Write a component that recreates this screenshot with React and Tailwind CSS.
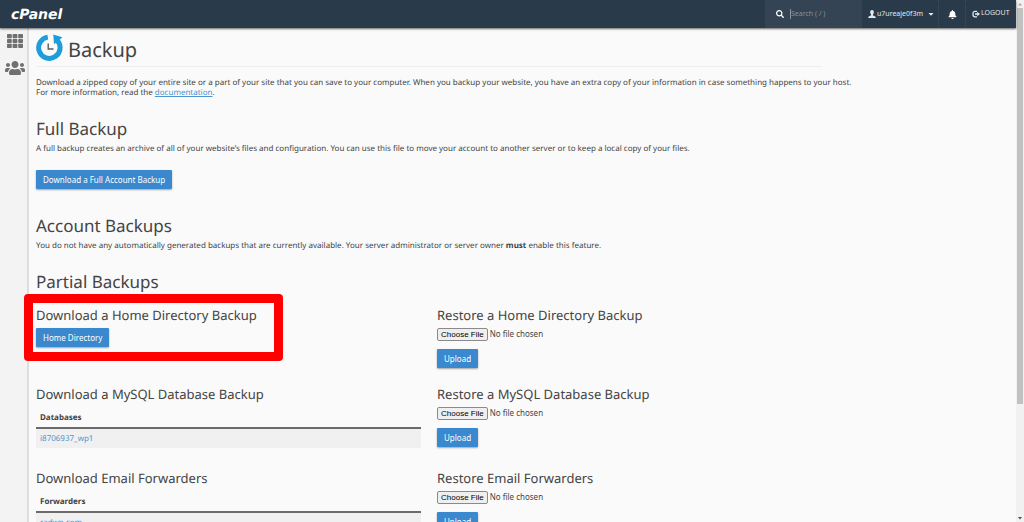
import { FaSearch, FaBell, FaCaretDown, FaUsers } from 'react-icons/fa';

const partials = [
  {
    id: 'home',
    download: 'Download a Home Directory Backup',
    restore: 'Restore a Home Directory Backup',
    action: 'Home Directory',
    highlighted: true,
  },
  {
    id: 'mysql',
    download: 'Download a MySQL Database Backup',
    restore: 'Restore a MySQL Database Backup',
    column: 'Databases',
    rows: ['i8706937_wp1'],
  },
  {
    id: 'forwarders',
    download: 'Download Email Forwarders',
    restore: 'Restore Email Forwarders',
    column: 'Forwarders',
    rows: ['radwp.com'],
  },
];

function Button({ children }) {
  return (
    <button
      type="button"
      className="block h-[19px] rounded-[1px] bg-[#3a88cd] px-[7px] text-[8px] text-white shadow-[0_1px_2px_rgba(0,0,0,0.35)]"
    >
      {children}
    </button>
  );
}

function UserIcon() {
  return (
    <svg viewBox="0 0 16 16" className="h-[8px] w-[8px] fill-current" aria-hidden="true">
      <path d="M8 0C5.6 0 4.3 1.8 4.3 4.3c0 1.9.8 3.6 1.9 4.6v1.5C5 11.4.5 12.5.5 14.6V16h15v-1.4c0-2.1-4.5-3.2-5.7-4.2V8.9c1.1-1 1.9-2.7 1.9-4.6C11.7 1.8 10.4 0 8 0z" />
    </svg>
  );
}

function LogoutIcon() {
  return (
    <svg viewBox="0 0 16 16" className="h-[8px] w-[8px]" aria-hidden="true">
      <path d="M10 2.5H6A4 4 0 0 0 2 6.5v3a4 4 0 0 0 4 4h4" fill="none" stroke="currentColor" strokeWidth="2.5" />
      <path d="M10.5 3.5L16 8l-5.5 4.5v-3H6v-3h4.5z" fill="currentColor" />
    </svg>
  );
}

function GridIcon() {
  const columns = [0, 5.6, 11.2];
  const rows = [0, 4.9, 9.8];
  return (
    <svg viewBox="0 0 16 14" className="h-[14px] w-[16px] fill-[#707070]" aria-hidden="true">
      {columns.map((x) => rows.map((y) => (
        <rect key={`${x}-${y}`} x={x} y={y} width="4.8" height="4.2" rx="0.8" />
      )))}
    </svg>
  );
}

function BackupIcon() {
  return (
    <svg viewBox="0 0 27 27" className="h-[27px] w-[27px]" aria-hidden="true">
      <path d="M11.8 3.1A10.7 10.7 0 1 0 21 6.2" fill="none" stroke="#1f9ddb" strokeWidth="5" />
      <path d="M17.3 0.5L26.3 3.3L23.5 6L18 10.2z" fill="#1f9ddb" />
      <path d="M12.2 9.5v5.5h5.3" fill="none" stroke="#5a5a5a" strokeWidth="1.4" />
    </svg>
  );
}

function Header() {
  return (
    <header className="relative z-10 flex h-[28px] shrink-0 items-stretch bg-[#293a4a] text-[7px] text-white shadow-[0_1px_2px_rgba(0,0,0,0.6)]">
      <a href="#home" className="flex items-center pt-[1px] pl-[11px] font-['DejaVu_Sans',sans-serif] text-[14px] leading-none font-bold italic">
        cPanel
      </a>
      <div className="ml-auto flex">
        <label className="flex w-[97px] items-center gap-[6px] bg-[#354454] pl-[11px]">
          <FaSearch className="size-[8px]" />
          <input
            type="text"
            aria-label="Search"
            placeholder="Search ( / )"
            className="h-[10px] w-[60px] border-l border-[#8b95a0] outline-none placeholder:text-[#84909b]"
          />
        </label>
        <button type="button" className="flex w-[76px] items-center gap-[1px] pl-[6px] text-[#e4e7ea]">
          <UserIcon />
          <span>u7ureaje0f3m</span>
          <FaCaretDown className="ml-[3px] size-[8px]" />
        </button>
        <button type="button" aria-label="Notifications" className="flex w-[28px] items-center justify-center border-x border-dotted border-[#3d4d5c]">
          <FaBell className="size-[9px]" />
        </button>
        <a href="#logout" className="flex w-[50px] items-center gap-[1px] pl-[6px] text-[#e4e7ea]">
          <LogoutIcon />
          LOGOUT
        </a>
      </div>
    </header>
  );
}

function Sidebar() {
  return (
    <nav className="flex w-[29px] shrink-0 flex-col items-center gap-[10px] border-r-2 border-[#dedede] bg-[#f3f3f3] pt-[6px] pl-[2px]">
      <a href="#tools" aria-label="Tools"><GridIcon /></a>
      <a href="#users" aria-label="User Manager"><FaUsers className="size-[20px] text-[#707070]" /></a>
    </nav>
  );
}

function DownloadTable({ column, rows }) {
  return (
    <table className="mt-[4px] mb-[4px] w-full text-left text-[8px]">
      <thead>
        <tr className="h-[21px] border-b-2 border-[#6b6b6b]">
          <th className="px-[4px] pt-[2px] font-bold">{column}</th>
        </tr>
      </thead>
      <tbody>
        {rows.map((row) => (
          <tr key={row} className="h-[20px] bg-[#f0f0f0]">
            <td className="px-[4px]"><a href={`#${row}`} className="text-[#4a94d0]">{row}</a></td>
          </tr>
        ))}
      </tbody>
    </table>
  );
}

function PartialBackup({ item }) {
  return (
    <div className="grid grid-cols-2 gap-x-[16px] pb-[18px]">
      <section className="relative">
        {item.highlighted && (
          <div className="pointer-events-none absolute -top-[13px] -left-[12px] h-[67px] w-[259px] rounded-[4px] border-[9px] border-[#fe0000]" />
        )}
        <h3 className="mb-[5px] text-[13px] leading-[16px]">{item.download}</h3>
        {item.action && <Button>{item.action}</Button>}
        {item.rows && <DownloadTable column={item.column} rows={item.rows} />}
      </section>
      <section>
        <h3 className="mb-[5px] text-[13px] leading-[16px]">{item.restore}</h3>
        <input
          type="file"
          aria-label={item.restore}
          className="mb-[8px] block h-[13px] text-[8px] leading-[11px] file:mr-[2px] file:h-[13px] file:rounded-[2px] file:border file:border-solid file:border-[#8a8a8a] file:bg-[#efefef] file:px-[3px] file:font-['Liberation_Sans'] file:text-[8px] file:leading-[11px] file:text-black"
        />
        <Button>Upload</Button>
      </section>
    </div>
  );
}

function ScrollBar() {
  return (
    <div className="flex w-[8px] shrink-0 flex-col items-center bg-[#f1f1f1]" aria-hidden="true">
      <svg viewBox="0 0 8 8" className="size-[8px]"><path d="M2 5.5L4 3l2 2.5z" fill="#a3a3a3" /></svg>
      <div className="w-[6px] flex-[396] bg-[#c1c1c1]" />
      <div className="flex-[110]" />
      <svg viewBox="0 0 8 8" className="size-[8px]"><path d="M2 3L4 5.5 6 3z" fill="#505050" /></svg>
    </div>
  );
}

export default function App() {
  return (
    <div className="flex h-screen overflow-hidden bg-[#fafafa] font-['Noto_Sans','Open_Sans',sans-serif] text-[8px] leading-[10px] text-[#444444] [text-rendering:geometricPrecision]">
      <div className="flex min-w-0 flex-1 flex-col">
        <Header />
        <div className="flex min-h-0 flex-1">
          <Sidebar />
          <main className="min-w-0 flex-1 pl-[7px]">
            <div className="max-w-[786px]">
              <div className="mb-[11px] flex h-[39px] items-center gap-[5px] border-b border-[#eeeeee]">
                <BackupIcon />
                <h1 className="pt-[5px] text-[20px] leading-[24px]">Backup</h1>
              </div>
              <p className="whitespace-nowrap">
                Download a zipped copy of your entire site or a part of your site that you can save to your computer. When you backup your website, you have an extra copy of your information in case something happens to your host.
                <br />
                For more information, read the{' '}
                <a href="#documentation" className="text-[#4a94d0] underline">documentation</a>.
              </p>

              <h2 className="mt-[21px] mb-[5px] text-[17px] leading-[20px]">Full Backup</h2>
              <p className="mb-[16px]">
                A full backup creates an archive of all of your website’s files and configuration. You can use this file to move your account to another server or to keep a local copy of your files.
              </p>
              <Button>Download a Full Account Backup</Button>

              <h2 className="mt-[27px] mb-[5px] text-[17px] leading-[20px]">Account Backups</h2>
              <p>
                You do not have any automatically generated backups that are currently available. Your server administrator or server owner <b>must</b> enable this feature.
              </p>

              <h2 className="mt-[21px] mb-[15px] text-[17px] leading-[20px]">Partial Backups</h2>
              {partials.map((item) => (
                <PartialBackup key={item.id} item={item} />
              ))}
            </div>
          </main>
        </div>
      </div>
      <ScrollBar />
    </div>
  );
}
